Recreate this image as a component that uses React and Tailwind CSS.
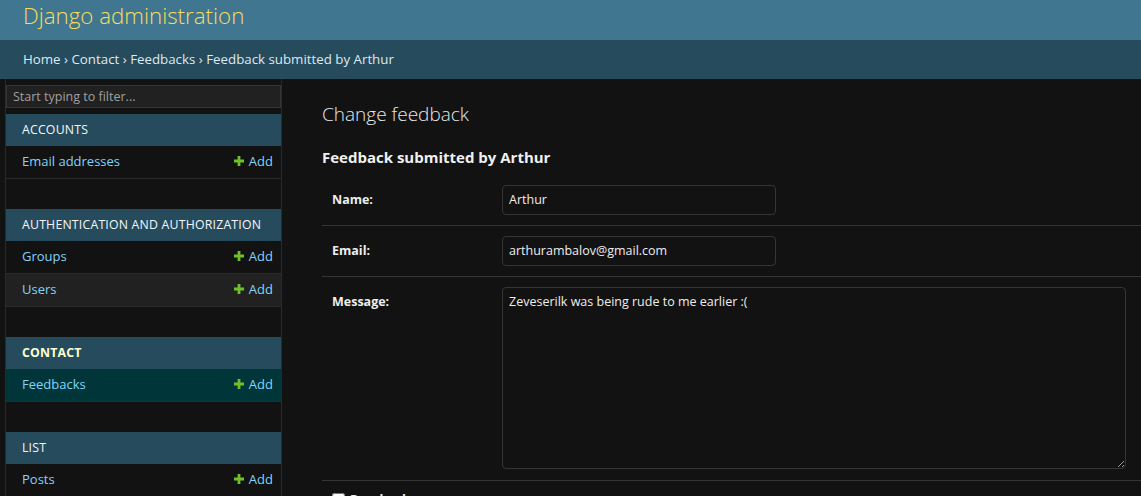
import React from "react";

const modules = [
  { name: "Accounts", models: ["Email addresses"] },
  { name: "Authentication and Authorization", models: ["Groups", "Users"] },
  { name: "Contact", models: ["Feedbacks"], current: true },
  { name: "List", models: ["Posts"] },
];

function PlusIcon() {
  return (
    <svg width="10" height="10" viewBox="0 0 10 10" className="mr-[5px] -mt-[2px]">
      <path d="M3.6 0h2.8v3.6H10v2.8H6.4V10H3.6V6.4H0V3.6h3.6z" fill="#70bf2b" />
    </svg>
  );
}

function Sidebar() {
  return (
    <nav className="w-[277px] shrink-0 border-x border-[#2a2a2a] ml-[5px]">
      <div className="pt-[6px] pb-[6px]">
        <input
          placeholder="Start typing to filter..."
          className="block w-full h-[23px] bg-[#212121] border border-[#353535] px-[6px] text-[12.5px] text-[#eee] placeholder:text-[#a0a0a0] outline-none"
        />
      </div>
      {modules.map((mod, i) => (
        <div key={mod.name} className={i > 0 ? "mt-[30px]" : ""}>
          <div
            className={`h-[32px] flex items-center bg-[#264b5d] pl-[16px] text-[12.3px] uppercase tracking-[0.2px] ${
              mod.current ? "font-bold text-[#ffffcc]" : "text-[#f7f7f7]"
            }`}
          >
            {mod.name}
          </div>
          {mod.models.map((m, j) => (
            <div
              key={m}
              className={`h-[33px] flex items-center justify-between pl-[16px] pr-[8px] border-b border-[#2a2a2a] text-[13px] ${
                mod.current ? "bg-[#00363a]" : j % 2 === 1 ? "bg-[#212121]" : "bg-[#121212]"
              }`}
            >
              <span className="text-[#81d4fa]">{m}</span>
              <span className="flex items-center text-[#81d4fa]">
                <PlusIcon />
                Add
              </span>
            </div>
          ))}
        </div>
      ))}
    </nav>
  );
}

function Row({ label, children }) {
  return (
    <div className="flex border-b border-[#353535] py-[10px] pl-[10px]">
      <label className="w-[170px] shrink-0 pt-[6px] text-[12.5px] font-bold text-[#eeeeee]">{label}</label>
      {children}
    </div>
  );
}

export default function App() {
  return (
    <div className="min-h-screen bg-[#121212] font-['Open_Sans',sans-serif] overflow-hidden">
      <header className="h-[40px] bg-[#417690] flex items-center px-[23px]">
        <h1 className="text-[22.3px] font-light text-[#f5dd5d] -mt-[8px]">Django administration</h1>
      </header>
      <div className="h-[39px] bg-[#264b5d] flex items-center px-[23px] text-[13.3px] text-[#dfe9ee]">
        Home › Contact › Feedbacks › Feedback submitted by Arthur
      </div>
      <div className="flex">
        <Sidebar />
        <main className="flex-1 pl-[40px] pt-[20px]">
          <h1 className="text-[19px] font-light text-[#e8e8e8] leading-[24px] mb-[20px] mt-[3px]">Change feedback</h1>
          <h2 className="text-[15px] font-bold text-[#f0f0f0] mb-[6px]">Feedback submitted by Arthur</h2>
          <Row label="Name:">
            <input
              defaultValue="Arthur"
              className="w-[274px] h-[30px] bg-[#121212] border border-[#353535] rounded-[4px] px-[6px] text-[12.5px] text-[#eeeeee] outline-none"
            />
          </Row>
          <Row label="Email:">
            <input
              defaultValue="arthurambalov@gmail.com"
              className="w-[274px] h-[30px] bg-[#121212] border border-[#353535] rounded-[4px] px-[6px] text-[12.5px] text-[#eeeeee] outline-none"
            />
          </Row>
          <div className="flex border-b border-[#353535] pt-[10px] pb-[11px] pl-[10px]">
            <label className="w-[170px] shrink-0 pt-[6px] text-[12.5px] font-bold text-[#eeeeee]">Message:</label>
            <textarea
              defaultValue="Zeveserilk was being rude to me earlier :("
              className="block w-[624px] h-[182px] bg-[#121212] border border-[#353535] rounded-[4px] px-[6px] py-[5px] text-[12.5px] text-[#eeeeee] outline-none"
            />
          </div>
          <div className="flex items-center pl-[10px] pt-[11px] gap-[5px]">
            <input type="checkbox" className="w-[13px] h-[13px] accent-[#777]" />
            <label className="text-[12.5px] font-bold text-[#eeeeee] leading-[16px]">Resolved</label>
          </div>
        </main>
      </div>
    </div>
  );
}
